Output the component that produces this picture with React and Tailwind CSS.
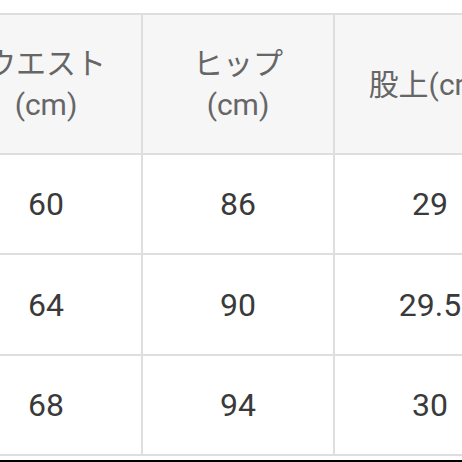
const header = [
  ["ウエスト", "(cm)"],
  ["ヒップ", "(cm)"],
  ["股上(cm)"],
];

const rows = [
  { h: "h-[100px]", cells: ["60", "86", "29"] },
  { h: "h-[101px]", cells: ["64", "90", "29.5"] },
  { h: "h-[100px]", cells: ["68", "94", "30"] },
];

const App = () => {
  return (
    <div className="relative w-[462px] h-[462px] overflow-hidden bg-white font-['Roboto','Noto_Sans_CJK_JP',sans-serif]">
      <div className="mt-[13px] -ml-[51px] w-[578px] border-t-2 border-l-2 border-[#dedede]">
        <div className="flex h-[140px] bg-[#f6f6f6]">
          {header.map((lines, i) => (
            <div key={i} className="w-[192px] shrink-0 flex flex-col items-center justify-center border-r-2 border-b-2 border-[#dedede] text-[30px] leading-[41px] text-[#666] whitespace-nowrap">
              {lines.map((l) => (
                <span key={l}>{l}</span>
              ))}
            </div>
          ))}
        </div>
        {rows.map((r, ri) => (
          <div key={ri} className={`flex ${r.h} bg-white`}>
            {r.cells.map((c, ci) => (
              <div key={ci} className="w-[192px] shrink-0 flex items-center justify-center border-r-2 border-b-2 border-[#dedede] text-[32px] text-[#3a3a3a] whitespace-nowrap">
                {c}
              </div>
            ))}
          </div>
        ))}
      </div>
      <div className="absolute bottom-0 left-0 w-full h-[2px] bg-black" />
    </div>
  );
};

export default App;
